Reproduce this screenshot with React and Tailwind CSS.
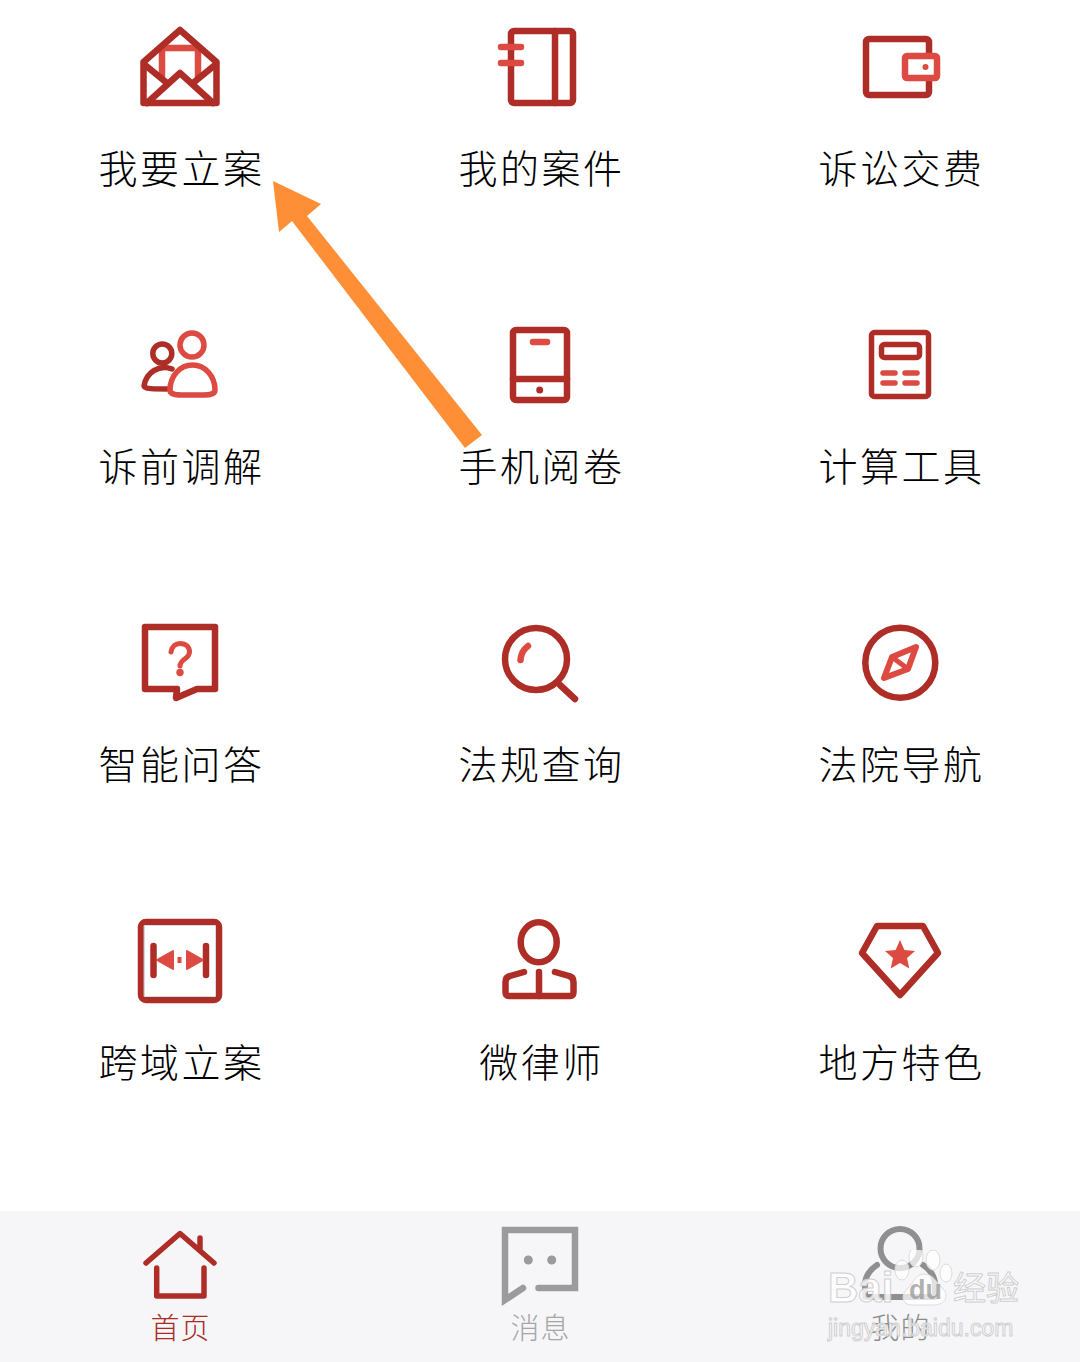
const DARK = "#ae2e27";
const LIGHT = "#dc4a41";
const GRAY = "#9b9b9b";

function Icon({ children, width = 6.5 }) {
  return (
    <svg
      viewBox="0 0 80 80"
      fill="none"
      strokeWidth={width}
      strokeLinecap="round"
      strokeLinejoin="round"
      className="w-[80px] h-[80px] overflow-visible"
    >
      {children}
    </svg>
  );
}

const MailIcon = () => (
  <Icon>
    <path d="M22 50V22H58V50" stroke={LIGHT} />
    <path d="M3.5 36L40 4L76.5 36V77H3.5Z" stroke={DARK} />
    <path d="M5 39L27 57M75 39L53 57M7 77L40 47L73 77" stroke={DARK} />
  </Icon>
);

const NotebookIcon = () => (
  <Icon>
    <rect x="11" y="5" width="62" height="72" rx="3" stroke={DARK} />
    <path d="M55 5V77" stroke={DARK} />
    <path d="M1 21H21M1 37H21" stroke={LIGHT} />
  </Icon>
);

const WalletIcon = () => (
  <Icon>
    <rect x="6" y="13" width="63" height="56" rx="3" stroke={DARK} />
    <rect x="45" y="30" width="32" height="22" rx="2" stroke={LIGHT} fill="#fff" />
    <circle cx="65.5" cy="41" r="3" fill={LIGHT} />
  </Icon>
);

const PeopleIcon = () => (
  <Icon width={5.5}>
    <circle cx="22.3" cy="29.5" r="9.5" stroke={DARK} />
    <path d="M32 45C20 40 6 48 4 62C4 65 15 65 27 65" stroke={DARK} />
    <circle cx="52" cy="21" r="12" stroke={LIGHT} />
    <path d="M30 66C30 52 40 41 52.500 41C65 41 75 52 75 66C75 72 65 71 52 71C40 71 30 72 30 66Z" stroke={LIGHT} fill="#fff" />
  </Icon>
);

const TabletIcon = () => (
  <Icon>
    <rect x="13" y="6" width="54" height="70" rx="3" stroke={DARK} />
    <path d="M13 55H67" stroke={DARK} />
    <path d="M33 18H47" stroke={LIGHT} />
    <circle cx="39.700" cy="66" r="3.500" fill={DARK} />
  </Icon>
);

const CalcIcon = () => (
  <Icon width={5.5}>
    <rect x="11.500" y="8.500" width="57" height="64" rx="3" stroke={DARK} />
    <rect x="21.500" y="20.500" width="38" height="13" rx="3" stroke={DARK} />
    <path d="M23 49H35M45 49H57M23 59H35M45 59H57" stroke={LIGHT} />
  </Icon>
);

const QuestionIcon = () => (
  <Icon>
    <path d="M5 5H75V67H57L36 76L37 67H5Z" stroke={DARK} />
    <path d="M31 30C32 24 36 21.500 40 21.500C46 21.500 49.500 25 49.500 30C49.500 37 40 37 40 44" stroke={LIGHT} strokeWidth="5" />
    <circle cx="40" cy="50.500" r="3.700" fill={LIGHT} />
  </Icon>
);

const SearchIcon = () => (
  <Icon>
    <circle cx="36" cy="37" r="31" stroke={DARK} />
    <path d="M60 63L75 77" stroke={DARK} />
    <path d="M28 24C24 27 21 32 20.500 38" stroke={LIGHT} />
  </Icon>
);

const CompassIcon = () => (
  <Icon>
    <circle cx="40.300" cy="40.700" r="35" stroke={DARK} />
    <path d="M56 25L32 35L24 56L48 47Z" stroke={LIGHT} strokeWidth="6" />
    <path d="M32 35L48 47" stroke={LIGHT} strokeWidth="5" />
  </Icon>
);

const TransferIcon = () => (
  <Icon>
    <rect x="1" y="2" width="78" height="78" rx="5" stroke={DARK} />
    <rect x="4.500" y="5.500" width="71" height="71" stroke="#cfdcec" strokeWidth="1" />
    <path d="M13.500 26V55M66 26V55" stroke={DARK} />
    <path d="M17 40L33 31V49Z M63 40L47 31V49Z" fill={LIGHT} stroke={LIGHT} strokeWidth="2" />
    <path d="M39.500 37V43" stroke={LIGHT} strokeWidth="4" strokeLinecap="butt" />
  </Icon>
);

const LawyerIcon = () => (
  <Icon>
    <ellipse cx="38.700" cy="22.300" rx="18" ry="20" stroke={DARK} />
    <path d="M24 52L10 56Q5.500 57 5.500 62V72Q5.500 76 9 76H70Q73.500 76 73.500 72V62Q73.500 57 69 56L55 52" stroke={DARK} />
    <path d="M39 52V76" stroke={DARK} />
  </Icon>
);

const GemIcon = () => (
  <Icon>
    <path d="M17 6H63L78 33L40 75L2 33Z" stroke={DARK} />
    <path d="M40 20L44.400 30L55 31L47 38L49.300 48.500L40 43L30.700 48.500L33 38L25 31L35.600 30Z" fill={LIGHT} />
  </Icon>
);

const HomeIcon = () => (
  <Icon width={5.5}>
    <path d="M6 38L40 8.500L74 38M60 13V24" stroke={DARK} />
    <path d="M16.700 43V71H64V43" stroke={DARK} />
  </Icon>
);

const ChatIcon = () => (
  <Icon>
    <path d="M23 63L5 75V5H75V63H38.500" stroke={GRAY} strokeLinejoin="miter" />
    <circle cx="28.300" cy="35" r="4.500" fill={GRAY} />
    <circle cx="51.700" cy="35" r="4.500" fill={GRAY} />
  </Icon>
);

const UserIcon = () => (
  <Icon width={6}>
    <circle cx="40" cy="23.500" r="19.500" stroke="#8f8f8f" />
    <path d="M17 40C8 46 5 52 5 60V72H75V60C75 52 72 46 63 40" stroke="#8f8f8f" />
  </Icon>
);

const items = [
  { label: "我要立案", icon: <MailIcon /> },
  { label: "我的案件", icon: <NotebookIcon /> },
  { label: "诉讼交费", icon: <WalletIcon /> },
  { label: "诉前调解", icon: <PeopleIcon /> },
  { label: "手机阅卷", icon: <TabletIcon /> },
  { label: "计算工具", icon: <CalcIcon /> },
  { label: "智能问答", icon: <QuestionIcon /> },
  { label: "法规查询", icon: <SearchIcon /> },
  { label: "法院导航", icon: <CompassIcon /> },
  { label: "跨域立案", icon: <TransferIcon /> },
  { label: "微律师", icon: <LawyerIcon /> },
  { label: "地方特色", icon: <GemIcon /> },
];

const tabs = [
  { label: "首页", icon: <HomeIcon />, color: "text-[#a82c25]" },
  { label: "消息", icon: <ChatIcon />, color: "text-[#a6a6a6]" },
  { label: "我的", icon: <UserIcon />, color: "text-[#8c8c8c]" },
];

function Watermark() {
  const outline = "text-white/80 [-webkit-text-stroke:1px_#cfcfcf] font-['Liberation_Sans','Noto_Sans_CJK_SC',sans-serif]";
  return (
    <div className="absolute left-[828px] top-[1250px] w-[200px] h-[90px] pointer-events-none">
      <svg viewBox="0 0 200 60" className="absolute left-0 top-0 w-[200px] h-[60px]">
        <g fill="#ffffff" fillOpacity="0.72" stroke="#dcdcdc" strokeWidth="1">
          <ellipse cx="74" cy="20" rx="7" ry="10" />
          <ellipse cx="88" cy="7" rx="7" ry="10" />
          <ellipse cx="105" cy="10" rx="7" ry="10" />
          <ellipse cx="118" cy="23" rx="6" ry="9" />
          <path d="M96 24C106 24 108 33 114 38C122 45 117 55 106 55H84C74 55 72 45 80 38C86 33 87 24 96 24Z" />
        </g>
      </svg>
      <span className={`absolute left-0 top-[17px] text-[42px] leading-[42px] font-bold ${outline}`}>Bai</span>
      <span className="absolute left-[81px] top-[25px] text-[27px] leading-[30px] font-bold font-['Liberation_Sans',sans-serif] text-[#8f8f8f]/70">du</span>
      <span className={`absolute left-[125px] top-[21px] text-[33px] leading-[36px] ${outline}`}>经验</span>
      <span className={`absolute left-0 top-[65px] text-[23px] leading-[26px] whitespace-nowrap ${outline}`}>jingyan.baidu.com</span>
    </div>
  );
}

export default function App() {
  return (
    <div className="relative w-[1080px] h-[1362px] overflow-hidden bg-white font-['Noto_Sans_CJK_SC',sans-serif]">
      <div className="h-[1211px] pt-[26px] grid grid-cols-3 gap-y-[134px] content-start">
        {items.map((item) => (
          <div key={item.label} className="h-[164px] flex flex-col items-center">
            {item.icon}
            <div className="mt-[38px] h-[44px] pl-[3px] text-[39px] leading-[44px] font-light tracking-[2.5px] text-black">
              {item.label}
            </div>
          </div>
        ))}
      </div>

      <div className="h-[151px] pt-[14px] bg-[#f6f6f8] grid grid-cols-3">
        {tabs.map((tab) => (
          <div key={tab.label} className="flex flex-col items-center">
            {tab.icon}
            <div className={`h-[44px] -mt-[1px] text-[29px] leading-[44px] font-light tracking-[1px] pl-[1px] ${tab.color}`}>
              {tab.label}
            </div>
          </div>
        ))}
      </div>

      {/* annotation arrow over the grid */}
      <svg viewBox="0 0 1080 1362" className="absolute left-0 top-0 w-[1080px] h-[1362px] pointer-events-none">
        <path d="M273 181L321 204L307 216L482 435L465 448L292 221L279 232Z" fill="#fe8f36" />
      </svg>

      <Watermark />
    </div>
  );
}
